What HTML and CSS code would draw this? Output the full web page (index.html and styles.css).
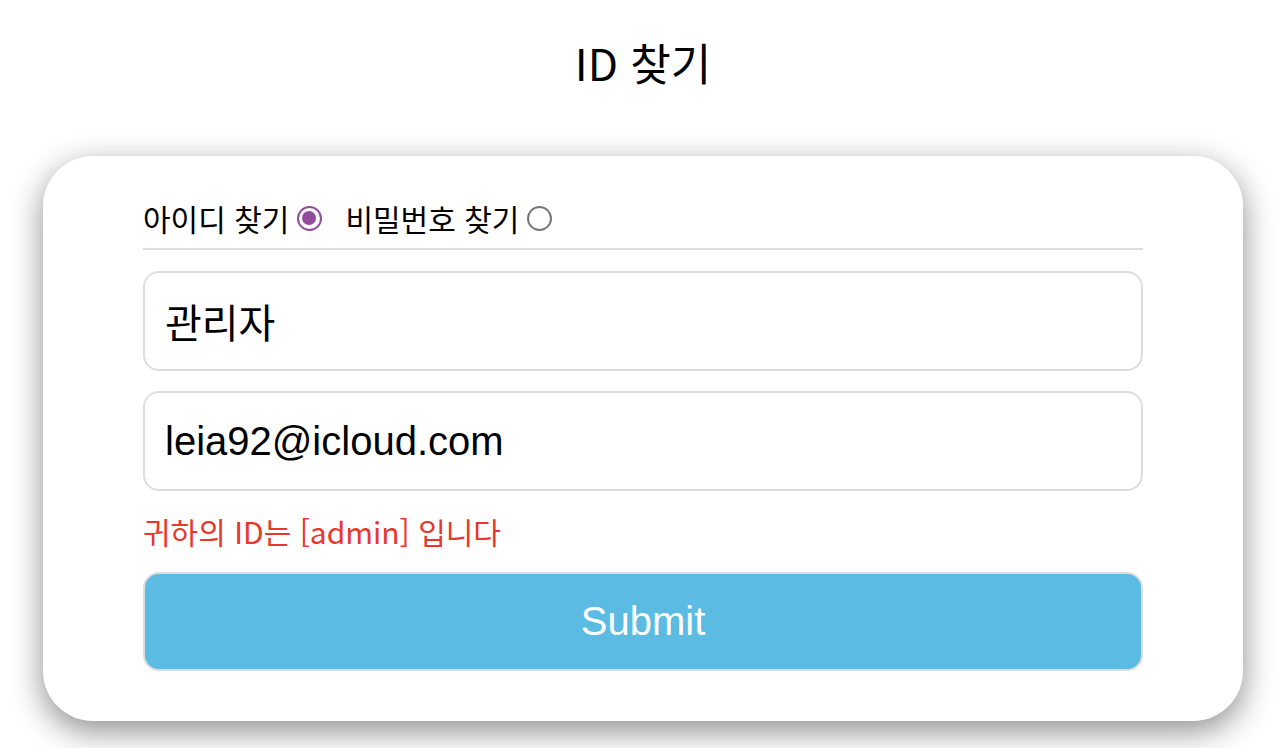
FILE: index.html
```html
<!DOCTYPE html>
<html lang="ko">
<head>
<meta charset="utf-8">
<title>ID 찾기</title>
<link rel="stylesheet" href="styles.css">
</head>
<body>
<h1 class="title">ID 찾기</h1>
<form class="card">
  <div class="tabs">
    <label class="tab">아이디 찾기 <input type="radio" name="mode" class="radio" checked></label>
    <label class="tab">비밀번호 찾기 <input type="radio" name="mode" class="radio"></label>
  </div>
  <input class="field" type="text" value="관리자">
  <input class="field" type="text" value="leia92@icloud.com">
  <p class="message">귀하의 ID는 [admin] 입니다</p>
  <button class="submit" type="button">Submit</button>
</form>
</body>
</html>
```
FILE: styles.css
```css
html, body {
  margin: 0;
  padding: 0;
  background: #fff;
}
body {
  font-family: "Noto Sans CJK KR", "Noto Sans", sans-serif;
  color: #000;
  padding: 0 45px 0 43px;
  height: 748px;
  overflow: hidden;
}
.title {
  margin: 0;
  padding-top: 30px;
  height: 156px;
  box-sizing: border-box;
  text-align: center;
  font-weight: 400;
  font-size: 44px;
  line-height: 64px;
}
.card {
  background: #fff;
  border-radius: 50px;
  box-shadow: 0 10px 32px rgba(0, 0, 0, 0.45);
  padding: 40px 100px 50px;
  display: flex;
  flex-direction: column;
}
.tabs {
  display: flex;
  gap: 23px;
  border-bottom: 2px solid #ddd;
  padding-bottom: 8px;
  margin-bottom: 21px;
}
.tab {
  display: flex;
  align-items: center;
  gap: 8px;
  font-size: 30px;
  line-height: 44px;
}
.radio {
  appearance: none;
  -webkit-appearance: none;
  margin: 0;
  width: 25px;
  height: 25px;
  border: 2px solid #777;
  border-radius: 50%;
  box-sizing: border-box;
  position: relative;
}
.radio:checked {
  border: 2.5px solid #914c9c;
}
.radio:checked::after {
  content: "";
  position: absolute;
  left: 3px;
  top: 3px;
  width: 14px;
  height: 14px;
  border-radius: 50%;
  background: #914c9c;
}
.field {
  height: 100px;
  box-sizing: border-box;
  border: 2px solid #ddd;
  border-radius: 16px;
  padding: 0 20px;
  font-family: "Liberation Sans", "Noto Sans CJK KR", sans-serif;
  font-size: 40px;
  color: #000;
  margin: 0 0 20px;
  outline: none;
}
.message {
  margin: 0 0 21px;
  color: #e8372b;
  font-size: 30px;
  line-height: 40px;
}
.submit {
  height: 99px;
  border: 2px solid #ddd;
  border-radius: 16px;
  background: #5bbbe3;
  color: #fff;
  font-family: "Liberation Sans", sans-serif;
  font-size: 40px;
}
```
